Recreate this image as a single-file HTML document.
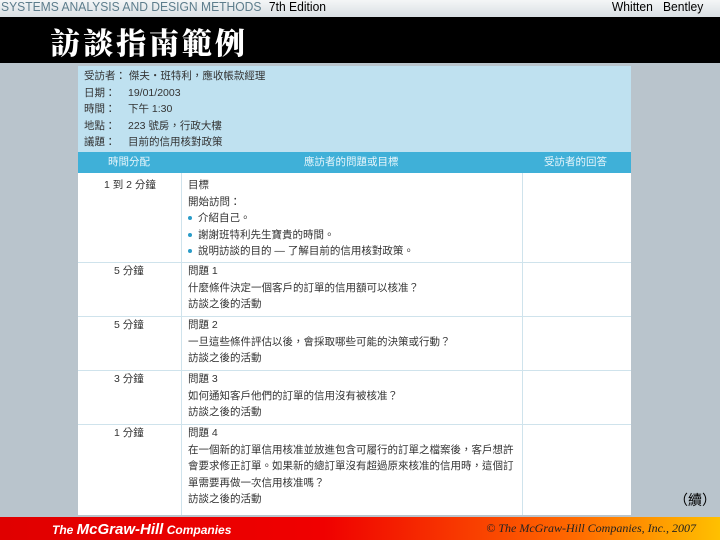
<!DOCTYPE html>
<html><head><meta charset="utf-8"><style>
*{margin:0;padding:0;box-sizing:border-box}
body{width:720px;height:540px;overflow:hidden;background:#b9c4cc;position:relative;font-family:"Liberation Sans","Noto Sans CJK TC",sans-serif}
.top{position:absolute;left:0;top:0;width:720px;height:17px;background:linear-gradient(#f4f6f7,#d9dfe3);font-size:13px;line-height:14px}
.top .l{position:absolute;left:1px;top:0;color:#5d7d8c;transform:scaleX(0.93);transform-origin:0 0;white-space:nowrap}
.top .l b{color:#000;font-weight:normal;margin-left:8px}
.top .r{position:absolute;right:17px;top:0;color:#000;transform:scaleX(0.93);transform-origin:100% 0;white-space:nowrap}
.title{position:absolute;left:0;top:17px;width:720px;height:46px;background:#000;color:#fff;font-family:"Noto Serif CJK SC","Noto Sans CJK TC",serif;font-weight:900;font-size:30px;line-height:48px;padding-left:50px;letter-spacing:3px}
.doc{position:absolute;left:78px;top:66px;width:553px;height:449px;background:#fff;font-size:10.5px;color:#333;overflow:hidden}
.hd{position:absolute;left:0;top:0;width:553px;height:86px;background:#bfe1f0}
.hd div{position:absolute;left:6px;height:16px;line-height:16px}
.hd span{position:absolute;left:44px;white-space:nowrap}
.bar{position:absolute;left:0;top:86px;width:553px;height:21px;background:#3fb0d8;color:#e8f6fb;line-height:21px}
.bar div{position:absolute;top:0}
.v{position:absolute;top:107px;width:1px;height:342px;background:#cfe3ec}
.h{position:absolute;left:0;width:553px;height:1px;background:#cfe3ec}
.t{position:absolute;white-space:nowrap;line-height:16.5px}
.dot{display:inline-block;width:4px;height:4px;border-radius:50%;background:#2a9cc8;margin-right:6px;vertical-align:middle}
.foot{position:absolute;left:0;top:517px;width:720px;height:23px;background:linear-gradient(90deg,#e00000 0%,#f00000 45%,#ff6a00 80%,#ffc000 100%)}
.foot .l{position:absolute;left:52px;top:4px;color:#fff;font-size:12px;font-style:italic;font-weight:bold}
.foot .l b{font-size:15px}
.foot .r{position:absolute;right:24px;top:4px;font-family:"Liberation Serif",serif;font-style:italic;font-size:12px;color:#222}
.cont{position:absolute;left:674px;top:490px;font-size:14px;color:#000}
</style></head><body>
<div class="top"><span class="l">SYSTEMS ANALYSIS AND DESIGN METHODS<b>7th Edition</b></span><span class="r">Whitten&nbsp;&nbsp; Bentley</span></div>
<div class="title">訪談指南範例</div>
<div class="doc">
<div class="hd">
<div style="top:2px">受訪者：&nbsp;傑夫・班特利，應收帳款經理</div>
<div style="top:19px">日期：<span>19/01/2003</span></div>
<div style="top:35px">時間：<span>下午 1:30</span></div>
<div style="top:52px">地點：<span>223 號房，行政大樓</span></div>
<div style="top:68px">議題：<span>目前的信用核對政策</span></div>
</div>
<div class="bar"><div style="left:30px">時間分配</div><div style="left:226px">應訪者的問題或目標</div><div style="left:466px">受訪者的回答</div></div>
<div class="v" style="left:103px"></div><div class="v" style="left:444px"></div>
<div class="h" style="top:196px"></div><div class="h" style="top:250px"></div><div class="h" style="top:304px"></div><div class="h" style="top:358px"></div>
<div class="t" style="left:26px;top:111px">1 到 2 分鐘</div>
<div class="t" style="left:110px;top:111px">目標<br>開始訪問：<br><span class="dot"></span>介紹自己。<br><span class="dot"></span>謝謝班特利先生寶貴的時間。<br><span class="dot"></span>說明訪談的目的 — 了解目前的信用核對政策。</div>
<div class="t" style="left:36px;top:197px">5 分鐘</div>
<div class="t" style="left:110px;top:197px">問題 1<br>什麼條件決定一個客戶的訂單的信用額可以核准？<br>訪談之後的活動</div>
<div class="t" style="left:36px;top:251px">5 分鐘</div>
<div class="t" style="left:110px;top:251px">問題 2<br>一旦這些條件評估以後，會採取哪些可能的決策或行動？<br>訪談之後的活動</div>
<div class="t" style="left:36px;top:305px">3 分鐘</div>
<div class="t" style="left:110px;top:305px">問題 3<br>如何通知客戶他們的訂單的信用沒有被核准？<br>訪談之後的活動</div>
<div class="t" style="left:36px;top:359px">1 分鐘</div>
<div class="t" style="left:110px;top:359px">問題 4<br>在一個新的訂單信用核准並放進包含可履行的訂單之檔案後，客戶想許<br>會要求修正訂單。如果新的總訂單沒有超過原來核准的信用時，這個訂<br>單需要再做一次信用核准嗎？<br>訪談之後的活動</div>
</div>
<div class="cont">（續）</div>
<div class="foot"><span class="l">The <b>McGraw-Hill</b> Companies</span><span class="r">© The McGraw-Hill Companies, Inc., 2007</span></div>
</body></html>
